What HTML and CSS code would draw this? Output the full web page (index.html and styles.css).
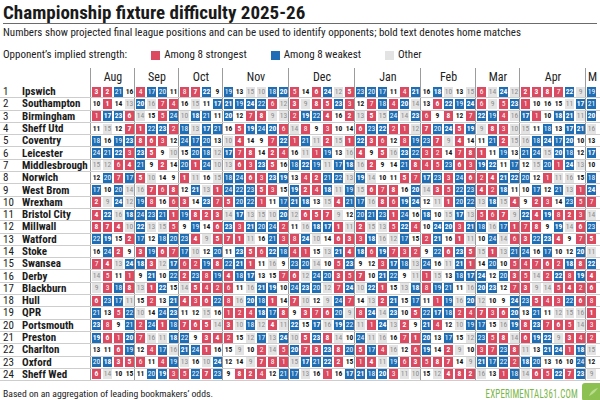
FILE: index.html
```html
<!DOCTYPE html>
<html lang="en">
<head>
<meta charset="utf-8">
<title>Championship fixture difficulty 2025-26</title>
<link rel="stylesheet" href="styles.css">
</head>
<body>
<div class="page">
  <h1 class="title">Championship fixture difficulty 2025-26</h1>
  <p class="subtitle">Numbers show projected final league positions and can be used to identify opponents; bold text denotes home matches</p>
  <div class="legend">
    <span class="legend-label">Opponent’s implied strength:</span>
    <span class="key"><i class="sw sw-strong"></i>Among 8 strongest</span>
    <span class="key"><i class="sw sw-weak"></i>Among 8 weakest</span>
    <span class="key"><i class="sw sw-other"></i>Other</span>
  </div>
  <div class="grid" id="grid"></div>
  <div class="footer">
    <span class="note">Based on an aggregation of leading bookmakers’ odds.</span>
    <span class="brand">
      <span class="brand-text">EXPERIMENTAL361.COM</span>
      <svg class="brand-icon" width="22" height="18" viewBox="0 0 22 18">
        <rect x="0" y="0" width="22" height="18" rx="3" fill="#8cc152"/>
        <path d="M7 13 C9 8 12 6 16 5 C14 8 12 10 9 12 Z" fill="#b9dc8e"/>
      </svg>
    </span>
  </div>
</div>
<script src="script.js"></script>
</body>
</html>
```

FILE: styles.css
```css
* { box-sizing: border-box; margin: 0; padding: 0; }
html, body { width: 600px; height: 400px; overflow: hidden; background: #fff; }
body {
  font-family: "Roboto Condensed", "Roboto", "Liberation Sans", sans-serif;
  font-stretch: condensed;
  color: #1b1b1b;
}
.page { width: 600px; height: 400px; overflow: hidden; }

.title {
  margin: 0 3px;
  padding-top: 2px;
  font-size: 19px;
  line-height: 21px;
  font-weight: 700;
  color: #1a1a1a;
  border-bottom: 1px solid #6b6b6b;
  white-space: nowrap;
}
.subtitle {
  margin-top: 2px;
  padding-left: 3px;
  font-size: 11px;
  line-height: 14px;
  white-space: nowrap;
  color: #222;
}
.legend {
  margin-top: 8px;
  padding-left: 3px;
  display: flex;
  align-items: center;
  gap: 24px;
  font-size: 11px;
  line-height: 14px;
  white-space: nowrap;
  color: #222;
}
.key { display: flex; align-items: center; }
.sw { display: inline-block; width: 9px; height: 9px; margin-right: 4px; }
.sw-strong { background: #db4a60; }
.sw-weak { background: #1f6db4; }
.sw-other { background: #e3e3e3; }

.grid { margin-top: 6px; }
.row {
  display: flex;
  height: 12.3px;
  border-bottom: 1px solid #cdcdcd;
  white-space: nowrap;
}
.row.head { height: 18px; border-bottom: none; }
.label {
  width: 91px;
  flex: none;
  display: flex;
  align-items: center;
  font-size: 11px;
  line-height: 11px;
}
.rank { width: 22px; padding-left: 3px; color: #1b1b1b; }
.name { font-weight: 700; color: #1b1b1b; }

.month {
  box-sizing: content-box;
  flex: none;
  display: flex;
  align-items: center;
  margin-left: -1px;
  border-left: 1px solid #9c9c9c;
}
.month:first-of-type { margin-left: 0; border-left: none; }
.row.head .month {
  justify-content: center;
  font-size: 12px;
  color: #222;
}
.row.head .month.cut { justify-content: flex-start; padding-left: 2px; }

.c {
  width: 9px;
  height: 10px;
  margin: 0 1px;
  flex: none;
  font-size: 7.5px;
  line-height: 10px;
  text-align: center;
  color: #fff;
  font-weight: 400;
}
.c.s { background: #db4a60; }
.c.w { background: #1f6db4; }
.c.o { background: #e3e3e3; color: #8d8d8d; }
.c.h { font-weight: 700; }
.c.o.h { background: transparent; color: #141414; }

.footer {
  height: 19px;
  display: flex;
  justify-content: space-between;
  align-items: flex-end;
  padding-left: 3px;
}
.note { font-size: 9.7px; line-height: 12px; color: #222; white-space: nowrap; }
.brand { display: flex; align-items: flex-start; align-self: stretch; padding-top: 2px; }
.brand-text {
  display: inline-block;
  font-size: 13.5px;
  line-height: 16px;
  color: #7ab648;
  letter-spacing: 0.3px;
  margin-right: 4px;
  margin-top: 2px;
  white-space: nowrap;
  transform: scaleX(0.66);
  transform-origin: right center;
}
.brand-icon { display: block; margin-right: -4px; }
```

FILE: script.js
```js
(function () {
  var months = [["Aug",4],["Sep",4],["Oct",4],["Nov",6],["Dec",6],["Jan",6],["Feb",5],["Mar",4],["Apr",6],["M",1]];
  var teams = [
    ["Ipswich","3 2 21 16 4 17 20 11 8 7 22 9 19 13 15 10 18 20 5 14 6 24 12 5 23 20 17 11 4 21 16 18 10 13 15 6 14 24 12 2 3 8 7 22 9 19"],
    ["Southampton","10 1 14 13 20 16 7 4 16 15 11 17 21 19 24 22 6 12 3 9 8 5 23 3 12 7 18 4 20 14 13 6 22 19 24 6 9 5 23 1 10 16 15 11 17 21"],
    ["Birmingham","1 17 23 6 14 15 5 24 10 18 21 11 20 12 7 8 9 13 2 19 22 4 16 2 13 5 15 24 14 23 6 9 8 12 7 22 19 4 16 17 1 10 18 21 11 20"],
    ["Sheff Utd","11 15 12 7 1 22 23 2 18 13 17 21 16 5 19 24 20 6 14 8 9 3 10 14 6 23 22 2 1 12 7 20 24 5 19 9 8 3 10 15 11 18 13 17 21 16"],
    ["Coventry","18 16 19 23 8 6 3 12 24 17 20 13 10 4 14 9 7 22 1 21 11 2 15 1 22 3 6 12 8 19 23 7 9 4 14 11 21 2 15 16 18 24 17 20 10 13"],
    ["Leicester","24 21 22 3 23 5 9 10 15 20 18 12 17 7 8 14 2 4 16 11 1 19 13 16 4 9 5 16 23 22 3 2 14 7 8 1 11 19 13 21 24 15 20 18 12 17"],
    ["Middlesbrough","15 12 6 4 21 9 2 14 20 1 24 10 13 6 3 23 5 16 18 22 19 11 17 18 16 2 9 14 21 8 4 5 23 6 3 19 22 11 17 12 15 20 1 24 13 10"],
    ["Norwich","12 20 7 17 5 10 14 9 1 11 16 15 18 24 6 3 23 19 13 4 2 21 22 13 19 14 10 11 5 7 17 23 3 24 6 2 4 21 22 20 12 1 11 16 15 18"],
    ["West Brom","17 10 20 14 16 7 6 8 12 21 13 1 24 22 23 5 3 15 19 2 4 18 11 19 15 6 7 8 16 20 14 3 5 22 23 4 2 18 11 10 17 12 21 13 1 24"],
    ["Wrexham","2 9 24 12 19 8 16 6 3 14 23 7 5 20 22 1 11 17 21 18 13 15 4 21 17 16 8 6 19 24 12 11 1 20 22 13 18 15 4 9 2 3 14 23 5 7"],
    ["Bristol City","4 22 16 18 24 23 21 1 19 8 2 3 14 17 13 15 10 20 12 6 5 7 9 12 20 21 23 1 24 16 18 10 15 17 13 5 6 7 9 22 4 19 8 2 3 14"],
    ["Millwall","8 7 4 10 22 13 15 5 9 19 14 6 23 3 21 20 24 2 11 16 18 17 1 11 2 15 13 5 22 4 10 24 20 3 21 18 16 17 1 7 8 9 19 14 6 23"],
    ["Watford","22 19 15 2 17 12 18 20 23 4 9 5 7 1 11 16 21 3 8 24 10 14 6 3 3 18 16 12 17 15 2 21 16 1 11 10 24 14 6 3 22 23 4 9 7 5"],
    ["Stoke","16 24 2 9 3 19 6 7 17 10 12 20 11 23 5 6 22 18 4 1 15 13 21 4 18 6 19 7 3 2 9 22 6 23 5 15 1 13 21 24 16 17 10 12 20 11"],
    ["Swansea","7 4 13 24 18 3 12 17 6 2 19 8 22 21 1 11 16 9 23 20 14 10 5 23 9 12 3 17 18 13 24 16 11 21 1 14 20 10 5 4 7 6 2 18 8 22"],
    ["Derby","14 5 11 1 9 21 10 22 2 23 8 19 4 18 17 13 15 7 6 12 24 20 3 5 7 10 21 22 9 11 1 15 13 18 17 24 12 20 3 5 14 2 22 8 19 4"],
    ["Blackburn","9 3 18 8 13 1 22 15 14 5 4 2 6 11 16 21 19 10 24 23 20 12 7 24 10 22 1 15 13 18 8 19 21 11 16 20 23 12 7 3 9 14 5 4 2 6"],
    ["Hull","6 23 17 11 15 2 13 21 4 3 6 22 8 16 20 18 1 14 7 10 12 9 24 7 14 13 2 21 15 17 11 1 19 16 20 12 10 9 24 23 5 4 3 22 6 8"],
    ["QPR","21 13 5 22 10 14 24 23 11 12 15 16 1 2 4 18 17 8 9 3 7 6 20 9 8 24 14 23 10 5 22 17 18 2 4 7 3 6 20 13 21 11 12 15 16 1"],
    ["Portsmouth","23 8 9 21 2 24 1 18 7 6 5 14 3 10 18 12 4 11 22 15 17 16 19 22 11 1 24 13 2 9 21 4 12 10 19 17 15 16 19 8 23 7 6 5 14 3"],
    ["Preston","19 6 1 20 7 16 11 18 22 9 3 4 2 15 12 17 13 24 10 5 23 8 14 10 24 11 16 16 7 1 20 13 17 15 12 23 5 8 14 6 19 22 9 3 4 2"],
    ["Charlton","13 11 6 19 12 4 17 16 21 24 1 16 15 9 10 2 14 5 20 7 3 23 8 20 5 17 4 16 12 6 19 14 2 9 10 3 7 23 8 11 13 21 24 1 18 15"],
    ["Oxford","20 18 3 5 6 11 4 19 13 16 10 24 12 14 9 7 8 1 15 17 21 22 2 15 1 4 11 19 6 3 5 8 7 14 9 21 17 22 2 18 20 13 16 10 24 12"],
    ["Sheff Wed","6 14 10 15 11 20 19 3 5 22 7 23 9 8 2 4 12 21 17 13 16 1 16 17 21 18 20 3 11 10 15 12 4 8 2 16 13 1 18 14 6 5 22 7 23 9"]
  ];

  function el(tag, cls, text) {
    var e = document.createElement(tag);
    if (cls) e.className = cls;
    if (text !== undefined) e.textContent = text;
    return e;
  }

  var grid = document.getElementById("grid");

  var head = el("div", "row head");
  head.appendChild(el("div", "label"));
  months.forEach(function (m, i) {
    var g = el("div", "month" + (i === months.length - 1 ? " cut" : ""), m[0]);
    g.style.width = (m[1] * 11) + "px";
    head.appendChild(g);
  });
  grid.appendChild(head);

  teams.forEach(function (t, r) {
    var row = el("div", "row");
    var label = el("div", "label");
    label.appendChild(el("span", "rank", String(r + 1)));
    label.appendChild(el("span", "name", t[0]));
    row.appendChild(label);
    var nums = t[1].split(" ").map(Number);
    var idx = 0;
    months.forEach(function (m) {
      var g = el("div", "month");
      for (var k = 0; k < m[1]; k++) {
        var n = nums[idx];
        var cls = n <= 8 ? "s" : (n >= 17 ? "w" : "o");
        var home = ((r + idx + ((idx * 7 + r * 3) % 5 === 0 ? 1 : 0)) % 2) === 1;
        g.appendChild(el("span", "c " + cls + (home ? " h" : ""), String(n)));
        idx++;
      }
      row.appendChild(g);
    });
    grid.appendChild(row);
  });
})();
```
